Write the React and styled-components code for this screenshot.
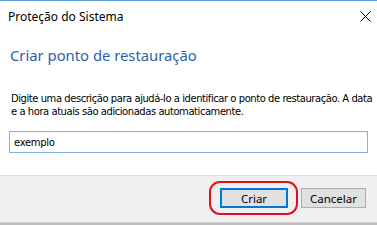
import React, { useState } from "react";
import styled, { createGlobalStyle } from "styled-components";

const GlobalStyle = createGlobalStyle`
  html, body {
    margin: 0;
    padding: 0;
    background: #ffffff;
  }
  * {
    box-sizing: border-box;
  }
`;

const Window = styled.div`
  width: 377px;
  height: 225px;
  display: flex;
  flex-direction: column;
  background: #ffffff;
  border-top: 1px solid #5b9bd5;
  overflow: hidden;
`;

const TitleBar = styled.div`
  height: 30px;
  flex-shrink: 0;
  display: flex;
  align-items: center;
  justify-content: space-between;
  padding: 0 8px 0 8px;
  font-family: "Noto Sans", "Open Sans", sans-serif;
  font-size: 12px;
  color: #000000;
`;

const CloseButton = styled.div`
  width: 24px;
  height: 24px;
  display: flex;
  align-items: center;
  justify-content: center;
  margin-right: -8px;
`;

const Body = styled.div`
  flex: 1;
  display: flex;
  flex-direction: column;
  padding: 14px 9px 0 10px;
`;

const Heading = styled.h1`
  margin: 0;
  font-family: "Noto Sans", "Open Sans", sans-serif;
  font-weight: 400;
  font-size: 14.8px;
  line-height: 20px;
  color: #2c62ab;
`;

const Description = styled.p`
  margin: 27px -12px 0 1px;
  font-family: "DejaVu Sans", Verdana, sans-serif;
  font-size: 10px;
  letter-spacing: -0.45px;
  line-height: 13px;
  color: #000000;
`;

const Field = styled.input`
  margin-top: 13px;
  width: 359px;
  height: 22px;
  margin-left: -1px;
  flex-shrink: 0;
  border: 1px solid #7eb4ea;
  padding: 0 4px;
  font-family: "DejaVu Sans", Verdana, sans-serif;
  font-size: 10px;
  letter-spacing: -0.3px;
  color: #000000;
  outline: none;
  caret-color: #000000;
`;

const Footer = styled.div`
  height: 48px;
  flex-shrink: 0;
  display: flex;
  align-items: center;
  justify-content: flex-end;
  gap: 11px;
  padding: 0 11px 2px 0;
  background: #f0f0f0;
  border-top: 1px solid #dcdcdc;
  border-bottom: 1px solid #cfcfcf;
`;

const Highlight = styled.div`
  padding: 5px 8px 5px 9px;
  margin-right: -8px;
  border: 2.5px solid #e3101c;
  border-radius: 11px;
  display: flex;
`;

const Button = styled.button`
  width: ${(p) => (p.primary ? "68px" : "65px")};
  height: 20px;
  padding: 0;
  background: #e1e1e1;
  border: ${(p) => (p.primary ? "2px solid #0078d7" : "1px solid #adadad")};
  font-family: "Noto Sans", "Open Sans", sans-serif;
  font-size: 11.5px;
  color: #000000;
  cursor: pointer;
`;

const Shadow = styled.div`
  height: 2px;
  flex-shrink: 0;
  background: #bdbdbd;
`;

export default function App() {
  const [value, setValue] = useState("exemplo");
  return (
    <>
      <GlobalStyle />
      <Window>
        <TitleBar>
          <span>Proteção do Sistema</span>
          <CloseButton>
            <svg width="11" height="11" viewBox="0 0 11 11">
              <path d="M0.5 0.5 L10.5 10.5 M10.5 0.5 L0.5 10.5" stroke="#000" strokeWidth="1" fill="none" />
            </svg>
          </CloseButton>
        </TitleBar>
        <Body>
          <Heading>Criar ponto de restauração</Heading>
          <Description>
            Digite uma descrição para ajudá-lo a identificar o ponto de restauração. A data e a hora atuais são adicionadas automaticamente.
          </Description>
          <Field value={value} onChange={(e) => setValue(e.target.value)} autoFocus />
        </Body>
        <Footer>
          <Highlight>
            <Button primary>Criar</Button>
          </Highlight>
          <Button>Cancelar</Button>
        </Footer>
        <Shadow />
      </Window>
    </>
  );
}
